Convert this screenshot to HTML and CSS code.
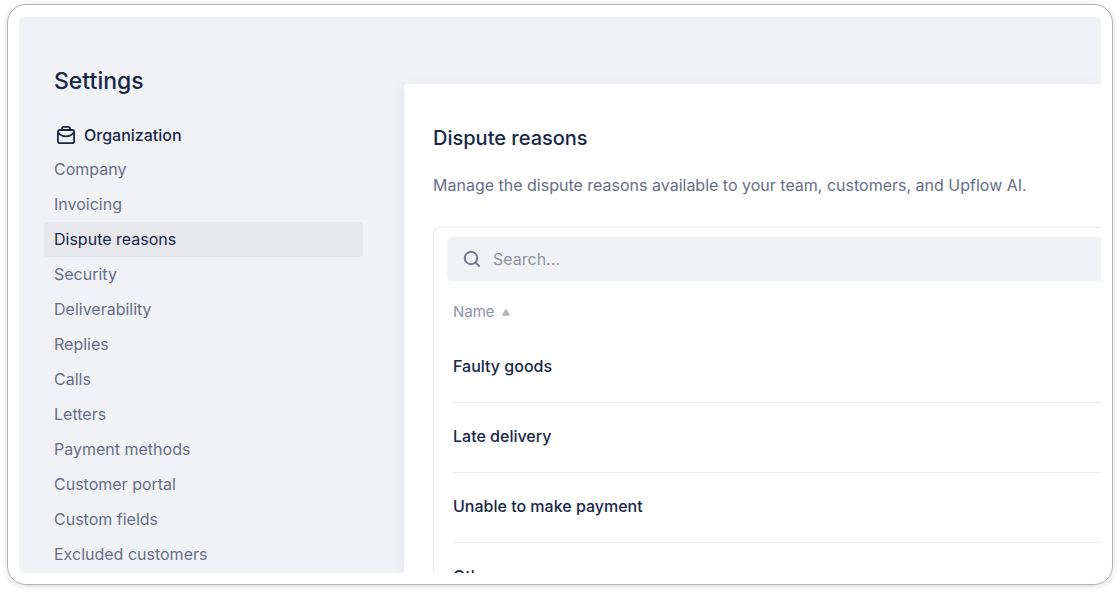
FILE: index.html
```html
<!DOCTYPE html>
<html lang="en">
<head>
<meta charset="utf-8">
<title>Settings – Dispute reasons</title>
<link rel="stylesheet" href="styles.css">
</head>
<body>
<div class="frame">
  <div class="app">
    <aside class="sidebar">
      <h1 class="sidebar-title">Settings</h1>
      <nav class="nav" aria-label="Settings">
        <h2 class="nav-heading">
          <svg class="nav-icon" viewBox="0 0 20 20" fill="none" stroke="currentColor" stroke-width="1.8" stroke-linejoin="round" stroke-linecap="round" aria-hidden="true">
            <rect x="1.9" y="5" width="16.2" height="13.2" rx="2"/>
            <path d="M6 4.8V4Q6 1.8 8 1.8H12Q14 1.8 14 4V4.8"/>
            <path d="M2 7.6Q5.4 11.4 10 11.4T18 7.6"/>
          </svg>
          Organization
        </h2>
        <a class="nav-link" href="#company">Company</a>
        <a class="nav-link" href="#invoicing">Invoicing</a>
        <a class="nav-link nav-link-active" href="#dispute-reasons" aria-current="page">Dispute reasons</a>
        <a class="nav-link" href="#security">Security</a>
        <a class="nav-link" href="#deliverability">Deliverability</a>
        <a class="nav-link" href="#replies">Replies</a>
        <a class="nav-link" href="#calls">Calls</a>
        <a class="nav-link" href="#letters">Letters</a>
        <a class="nav-link" href="#payment-methods">Payment methods</a>
        <a class="nav-link" href="#customer-portal">Customer portal</a>
        <a class="nav-link" href="#custom-fields">Custom fields</a>
        <a class="nav-link" href="#excluded-customers">Excluded customers</a>
      </nav>
    </aside>
    <main class="panel">
      <h2 class="panel-title">Dispute reasons</h2>
      <p class="panel-text">Manage the dispute reasons available to your team, customers, and Upflow AI.</p>
      <section class="card">
        <label class="search">
          <svg class="search-icon" viewBox="0 0 18 18" fill="none" stroke="currentColor" stroke-width="2" stroke-linecap="round" aria-hidden="true">
            <circle cx="8" cy="8" r="6.2"/>
            <path d="M12.6 12.6L16 16"/>
          </svg>
          <input class="search-input" type="search" placeholder="Search..." aria-label="Search">
        </label>
        <table class="table">
          <thead>
            <tr><th class="head-cell" scope="col" aria-sort="ascending">Name<svg class="sort-icon" viewBox="0 0 8 7" aria-hidden="true"><path d="M4 1L7 6H1Z" fill="currentColor" stroke="currentColor" stroke-width="1.6" stroke-linejoin="round"/></svg></th></tr>
          </thead>
          <tbody>
            <tr><td class="cell">Faulty goods</td></tr>
            <tr><td class="cell">Late delivery</td></tr>
            <tr><td class="cell">Unable to make payment</td></tr>
            <tr><td class="cell">Other</td></tr>
          </tbody>
        </table>
      </section>
    </main>
  </div>
</div>
</body>
</html>
```
FILE: styles.css
```css
* {
  box-sizing: border-box;
}

body {
  margin: 0;
  height: 100vh;
  padding: 4px 7px 10px;
  background: #fff;
  color: #172747;
  font-family: Inter, "Liberation Sans", sans-serif;
  font-size: 16px;
  line-height: 20px;
}

h1, h2, p {
  margin: 0;
}

.frame {
  height: 100%;
  padding: 12px 11px 11px;
  border: 1px solid #b4b4b4;
  border-radius: 19px;
  box-shadow: 0 1px 6px rgba(0, 0, 0, 0.16);
}

.app {
  display: flex;
  height: 100%;
  overflow: hidden;
  border-radius: 5px;
  background: #f0f2f6;
}

.sidebar {
  flex: 0 0 385px;
  padding: 48px 41px 0 25px;
}

.sidebar-title {
  padding-left: 10px;
  font-size: 23px;
  font-weight: 500;
  line-height: 32px;
}

.nav {
  display: flex;
  flex-direction: column;
  padding-top: 20px;
}

.nav-heading {
  display: flex;
  align-items: center;
  gap: 8px;
  height: 35px;
  padding-left: 12px;
  font-size: 16px;
  font-weight: 500;
}

.nav-icon {
  width: 20px;
  height: 20px;
}

.nav-link {
  height: 35px;
  padding: 0 10px;
  border-radius: 4px;
  color: #686e86;
  line-height: 35px;
  text-decoration: none;
}

.nav-link-active {
  background: #e7e8ec;
  color: #172747;
}

.panel {
  flex: 1;
  min-width: 0;
  margin-top: 67px;
  padding: 40px 0 0 29px;
  border-top-left-radius: 4px;
  background: #fff;
  box-shadow: 0 4px 14px rgba(23, 39, 71, 0.08);
}

.panel-title {
  font-size: 20px;
  font-weight: 500;
  line-height: 28px;
}

.panel-text {
  padding-top: 23px;
  color: #686e86;
}

.card {
  margin-top: 32px;
  padding: 9px 0 20px 13px;
  border: 1px solid #e9ebee;
  border-width: 1px 0 0 1px;
  border-top-left-radius: 6px;
}

.search {
  display: flex;
  align-items: center;
  gap: 12px;
  height: 44px;
  padding-left: 16px;
  border-radius: 5px 0 0 5px;
  background: #f0f2f6;
  color: #747990;
}

.search-icon {
  width: 18px;
  height: 18px;
}

.search-input {
  flex: 1;
  border: 0;
  padding: 0;
  background: transparent;
  color: #172747;
  font: inherit;
  outline: none;
}

.search-input::placeholder {
  color: #8f93a5;
  opacity: 1;
}

.table {
  width: 100%;
  padding-left: 6px;
  border-spacing: 0;
}

.head-cell {
  height: 52px;
  padding: 10px 0 0;
  color: #8f93a5;
  font-size: 15px;
  font-weight: 400;
  text-align: left;
}

.sort-icon {
  width: 8px;
  height: 7px;
  margin-left: 7px;
  color: #b4b5bd;
  vertical-align: 1px;
}

.cell {
  height: 70px;
  padding: 0 0 4px;
  border-bottom: 1px solid #e9ebee;
  font-weight: 500;
}
```
